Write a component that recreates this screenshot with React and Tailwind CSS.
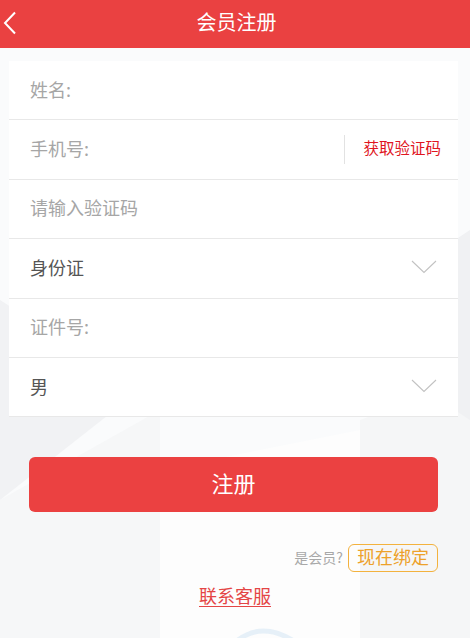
import React from "react";

const font = { fontFamily: '"Noto Sans CJK SC", "Noto Sans", sans-serif' };

function Chevron() {
  return (
    <svg width="26" height="14" viewBox="0 0 26 14" className="shrink-0">
      <path d="M1 1 L13 12.5 L25 1" fill="none" stroke="#c2c2c2" strokeWidth="1.1" />
    </svg>
  );
}

function Row({ children, right, dark }) {
  return (
    <div className="h-[59.4px] flex items-center border-b border-[#e8e8e8] px-[21px] pb-[3px]">
      <span className={`flex-1 text-[18px] leading-none ${dark ? "text-[#555555]" : "text-[#a6a6a6]"}`}>{children}</span>
      {right}
    </div>
  );
}

export default function App() {
  return (
    <div className="relative w-[470px] h-[638px] overflow-hidden bg-[#fafbfc]" style={font}>
      <svg className="absolute inset-0" width="470" height="638" viewBox="0 0 470 638">
        <polygon points="0,300 140,390 0,500" fill="#f1f2f4" />
        <polygon points="0,500 160,410 160,638 0,638" fill="#f6f7f8" />
        <polygon points="360,420 470,380 470,638 360,638" fill="#f5f6f7" />
        <polygon points="160,470 360,430 360,638 160,638" fill="#fdfdfd" />
        <polygon points="440,250 470,230 470,420 440,400" fill="#f0f1f3" />
        <path d="M238 640 Q262 622 292 640" fill="none" stroke="#e6f0f8" strokeWidth="5" />
      </svg>

      <div className="relative flex flex-col">
        <header className="h-12 bg-[#ea4141] grid grid-cols-[1fr_auto_1fr] items-center pl-[3px] pb-[4px]">
          <svg width="14" height="24" viewBox="0 0 14 24" className="mt-[2px]">
            <path d="M12 1.5 L2 12 L12 22.5" fill="none" stroke="#ffffff" strokeWidth="2" />
          </svg>
          <span className="text-white text-[20px] leading-none">会员注册</span>
          <span />
        </header>

        <main className="pt-[13px] pl-[9px] pr-[12px]">
          <div className="bg-white">
            <Row>姓名:</Row>
            <Row
              right={
                <div className="flex items-center -mr-[4px]">
                  <div className="w-px h-[29px] bg-[#e2e2e2] mr-[18px] mt-[3px]" />
                  <span className="text-[15.5px] text-[#e0161f] leading-none">获取验证码</span>
                </div>
              }
            >
              手机号:
            </Row>
            <Row>请输入验证码</Row>
            <Row dark right={<Chevron />}>身份证</Row>
            <Row>证件号:</Row>
            <Row dark right={<Chevron />}>男</Row>
          </div>
        </main>

        <section className="flex flex-col pl-[29px] pr-[32px] pt-[40px]">
          <button className="h-[55px] rounded-[6px] bg-[#eb4141] flex items-center justify-center pb-[6px]">
            <span className="text-white text-[22px] leading-none">注册</span>
          </button>

          <div className="mt-[32px] flex justify-end items-center gap-[5px]">
            <span className="text-[14px] text-[#a8a8a8] pb-[2px]">是会员?</span>
            <span className="h-[28px] px-[8px] pb-[4px] border-[1.5px] border-[#f3b23e] rounded-[6px] flex items-center text-[18px] text-[#eda12a] leading-none">
              现在绑定
            </span>
          </div>

          <div className="mt-[14px] flex justify-center pl-[3px]">
            <span className="text-[18px] text-[#e44545] underline underline-offset-[3px] leading-none">联系客服</span>
          </div>
        </section>
      </div>
    </div>
  );
}
